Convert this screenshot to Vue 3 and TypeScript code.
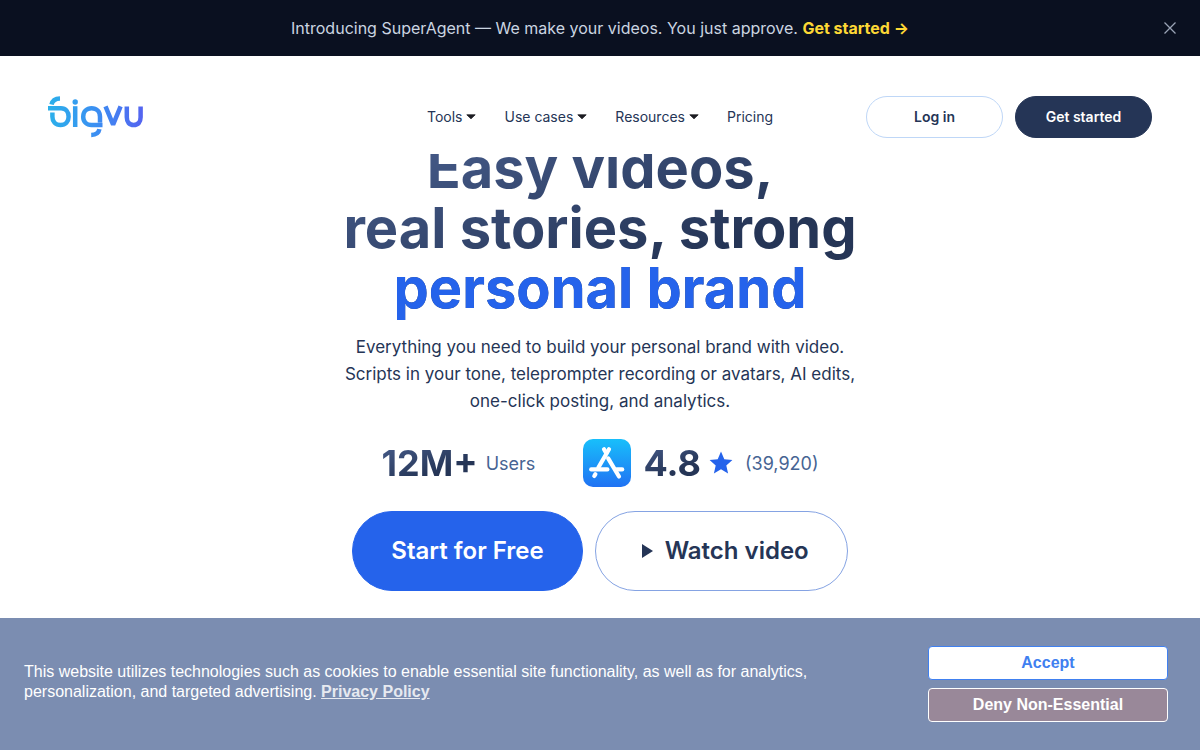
<script setup lang="ts">
import { ref } from 'vue'

interface NavItem {
  label: string
  menu: boolean
}

const navItems: NavItem[] = [
  { label: 'Tools', menu: true },
  { label: 'Use cases', menu: true },
  { label: 'Resources', menu: true },
  { label: 'Pricing', menu: false },
]

const showAnnouncement = ref(true)
const showCookies = ref(true)
</script>

<template>
  <div class="page">
    <div v-if="showAnnouncement" class="announcement">
      <p class="announcement-text">
        Introducing SuperAgent — We make your videos. You just approve.
        <a href="#">Get started →</a>
      </p>
      <button class="close" type="button" aria-label="Close" @click="showAnnouncement = false">
        <svg width="12" height="12" viewBox="0 0 12 12" fill="none" stroke="currentColor" stroke-width="1.3">
          <path d="M0.5 0.5 11.5 11.5M11.5 0.5 0.5 11.5" />
        </svg>
      </button>
    </div>

    <header class="header">
      <a class="logo" href="#" aria-label="bigvu">
        <svg width="96" height="42" viewBox="0 0 96 42" fill="none">
          <defs>
            <linearGradient id="logo-fill" x1="0" y1="0" x2="96" y2="0" gradientUnits="userSpaceOnUse">
              <stop offset="0" stop-color="#2bb0ea" />
              <stop offset="0.5" stop-color="#3b8ff2" />
              <stop offset="1" stop-color="#5563f0" />
            </linearGradient>
          </defs>
          <g stroke="url(#logo-fill)" stroke-width="4.5">
            <path d="M3.5 8.6C4.3 4.9 7.2 2.6 12 2.5" />
            <path d="M0 12.3H13C17.8 12.3 20.6 15.8 20.6 20.7S17.5 29 12.5 29 4.4 25.6 4.4 20.7V16.4" />
            <path d="M27.2 10.2V31" />
            <path d="M54.5 29H43.5C38.5 29 35.2 25.6 35.2 20.7S38.6 12.3 43.6 12.3 52 15.8 52 20.7V26.4" />
            <path d="M51.4 33.2C50.8 36.6 47.8 38.9 43.2 39" />
            <path d="M57.5 10.4 65.1 28.6 72.6 10.4" stroke-linejoin="bevel" />
            <path d="M78.8 10.4V21.3C78.8 26.1 81.2 29 85.7 29S92.6 26.1 92.6 21.3V10.4" />
          </g>
          <circle cx="27.2" cy="6" r="2.7" fill="url(#logo-fill)" />
        </svg>
      </a>

      <nav class="nav" aria-label="Main">
        <template v-for="item in navItems" :key="item.label">
          <button v-if="item.menu" class="nav-item" type="button">
            {{ item.label }}
            <svg width="10" height="6" viewBox="0 0 10 6" aria-hidden="true">
              <path d="M0.8 0.8H9.2L5 4.8Z" fill="#1c1c22" stroke="#1c1c22" stroke-width="0.8" stroke-linejoin="round" />
            </svg>
          </button>
          <a v-else class="nav-item" href="#">{{ item.label }}</a>
        </template>
      </nav>

      <div class="account">
        <a class="pill pill-light" href="#">Log in</a>
        <a class="pill pill-dark" href="#">Get started</a>
      </div>
    </header>

    <main class="hero">
      <h1>Easy videos,<br />real stories, strong<br /><span>personal brand</span></h1>
      <p class="lead">
        Everything you need to build your personal brand with video.<br />
        Scripts in your tone, teleprompter recording or avatars, AI edits,<br />
        one-click posting, and analytics.
      </p>

      <div class="stats">
        <div class="stat">
          <strong>12M+</strong>
          <span>Users</span>
        </div>
        <div class="stat">
          <svg class="store" width="48" height="48" viewBox="0 0 48 48" fill="none" role="img" aria-label="App Store">
            <defs>
              <linearGradient id="store-fill" x1="0" y1="0" x2="0" y2="48" gradientUnits="userSpaceOnUse">
                <stop offset="0" stop-color="#18bffb" />
                <stop offset="1" stop-color="#2072f3" />
              </linearGradient>
            </defs>
            <rect width="48" height="48" rx="10" fill="url(#store-fill)" />
            <g stroke="#fff" stroke-width="4.2" stroke-linecap="round">
              <path d="M26 10.2 15.4 28.5" />
              <path d="M21 10.2 23.3 14.2" />
              <path d="M25.2 19.4 36 37.5" />
              <path d="M8.2 30.4H24.4" />
              <path d="M33.6 30.4H39.2" />
              <path d="M12.4 35.2 11.3 37" />
            </g>
          </svg>
          <strong>4.8</strong>
          <svg class="star" width="24" height="24" viewBox="0 0 24 24" aria-hidden="true">
            <path
              d="M12 0.6 15.3 8.2 23.4 9 17.3 14.4 19.1 22.4 12 18.2 4.9 22.4 6.7 14.4 0.6 9 8.7 8.2Z"
              fill="#2563eb"
            />
          </svg>
          <span>(39,920)</span>
        </div>
      </div>

      <div class="actions">
        <a class="cta cta-primary" href="#">Start for Free</a>
        <button class="cta cta-outline" type="button">
          <svg width="11" height="14" viewBox="0 0 11 14" aria-hidden="true">
            <path d="M0 0 11 7 0 14Z" fill="#253556" />
          </svg>
          Watch video
        </button>
      </div>
    </main>

    <section v-if="showCookies" class="cookies" aria-label="Cookie consent">
      <p>
        This website utilizes technologies such as cookies to enable essential site functionality, as well as for
        analytics, personalization, and targeted advertising. <a href="#">Privacy Policy</a>
      </p>
      <div class="cookie-actions">
        <button class="accept" type="button" @click="showCookies = false">Accept</button>
        <button class="deny" type="button" @click="showCookies = false">Deny Non-Essential</button>
      </div>
    </section>
  </div>
</template>

<style>
body {
  margin: 0;
  background: #fff;
}
</style>

<style scoped>
.page {
  min-height: 100vh;
  font-family: Inter, "Liberation Sans", sans-serif;
  color: #253556;
}

.page * {
  box-sizing: border-box;
}

a {
  color: inherit;
  text-decoration: none;
}

button {
  font-family: inherit;
  cursor: pointer;
}

.announcement {
  display: flex;
  align-items: center;
  height: 56px;
  padding: 0 24px;
  background: #0a1020;
}

.announcement-text {
  flex: 1;
  margin: 0;
  padding-left: 12px;
  text-align: center;
  font-size: 16px;
  line-height: 24px;
  color: #cbd5e1;
}

.announcement-text a {
  font-weight: 700;
  color: #fdd835;
}

.close {
  display: flex;
  padding: 0;
  border: 0;
  background: none;
  color: #9aa3b5;
}

.header {
  position: sticky;
  top: 0;
  z-index: 2;
  display: grid;
  grid-template-columns: 1fr auto 1fr;
  align-items: center;
  padding: 40px 48px 16px;
  background: #fff;
}

.logo {
  display: flex;
}

.nav {
  display: flex;
  gap: 28px;
}

.nav-item {
  display: flex;
  align-items: center;
  gap: 4px;
  padding: 0;
  border: 0;
  background: none;
  font-size: 14px;
  line-height: 20px;
  color: #253556;
}

.account {
  display: flex;
  justify-content: flex-end;
  gap: 12px;
}

.pill {
  width: 137px;
  border: 1px solid #bfd7f7;
  border-radius: 21px;
  text-align: center;
  font-size: 14px;
  font-weight: 600;
  line-height: 40px;
}

.pill-dark {
  border-color: #253556;
  background: #253556;
  color: #fff;
}

.hero {
  display: flex;
  flex-direction: column;
  align-items: center;
  margin-top: -16px;
  padding-bottom: 160px;
  text-align: center;
}

h1 {
  margin: 0;
  padding-bottom: 8px;
  background: linear-gradient(160deg, #4a6090 0%, #253556 65%);
  background-clip: text;
  -webkit-background-clip: text;
  color: transparent;
  font-size: 56px;
  font-weight: 700;
  line-height: 60px;
}

h1 span {
  color: #2563eb;
}

.lead {
  margin: 8px 0 24px;
  font-size: 17px;
  line-height: 27px;
}

.stats {
  display: flex;
  gap: 48px;
}

.stat {
  display: flex;
  align-items: center;
  gap: 8px;
}

.stat strong {
  background: linear-gradient(160deg, #4a6090 0%, #253556 65%);
  background-clip: text;
  -webkit-background-clip: text;
  color: transparent;
  font-size: 36px;
  font-weight: 700;
  line-height: 48px;
}

.stat span {
  font-size: 18px;
  line-height: 27px;
  color: #466493;
}

.store,
.star {
  margin-right: 4px;
}

.actions {
  display: flex;
  gap: 12px;
  margin-top: 24px;
}

.cta {
  display: flex;
  align-items: center;
  height: 80px;
  padding: 0 38px;
  border: 1px solid #2563eb;
  border-radius: 40px;
  font-size: 24px;
  font-weight: 600;
  line-height: 32px;
}

.cta-primary {
  background: #2563eb;
  color: #fff;
}

.cta-outline {
  gap: 12px;
  padding-left: 46px;
  border-color: #85a3e3;
  background: #fff;
  color: #253556;
}

.cookies {
  position: fixed;
  right: 0;
  bottom: 0;
  left: 0;
  z-index: 3;
  display: flex;
  align-items: center;
  justify-content: space-between;
  padding: 28px 32px 28px 24px;
  background: #7b8db1;
  font-family: "Liberation Sans", Arial, sans-serif;
  color: #fff;
}

.cookies p {
  max-width: 800px;
  margin: 0;
  padding-bottom: 4px;
  font-size: 16px;
  line-height: 20px;
}

.cookies p a {
  font-weight: 700;
  color: #e6e9f0;
  text-decoration: underline;
}

.cookie-actions {
  display: flex;
  flex-direction: column;
  gap: 8px;
  width: 240px;
}

.cookie-actions button {
  height: 34px;
  padding: 0;
  border: 1px solid #fff;
  border-radius: 4px;
  font-size: 16px;
  font-weight: 700;
}

.cookie-actions .accept {
  border-color: #4080f0;
  background: #fff;
  color: #4080f0;
}

.cookie-actions .deny {
  background: #998899;
  color: #fff;
}
</style>
